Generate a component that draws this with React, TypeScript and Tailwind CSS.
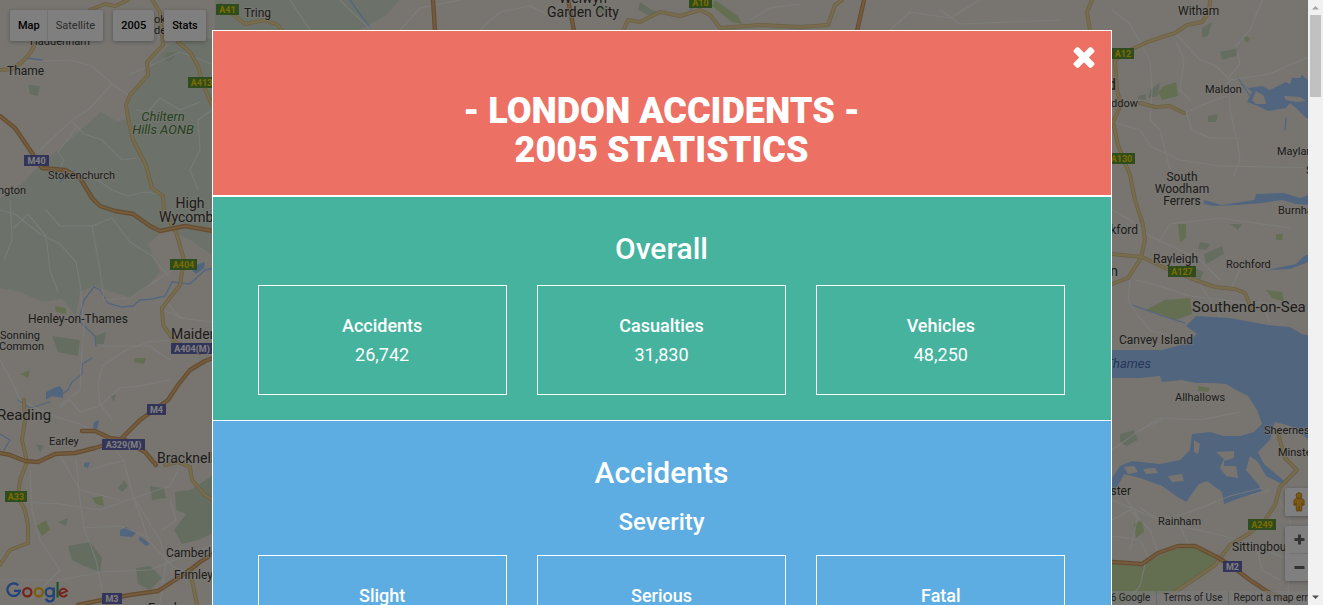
import React from "react";

type Point = [x: number, y: number];
type Anchor = "start" | "middle" | "end";

interface PlaceLabel {
  text: string;
  at: Point;
  size?: number;
  anchor?: Anchor;
}

interface RoadShield {
  text: string;
  at: Point;
  width: number;
  kind: "primary" | "motorway";
}

interface Stat {
  title: string;
  value?: string;
}

const places: PlaceLabel[] = [
  { text: "Haddenham", at: [30, 45], size: 11 },
  { text: "Thame", at: [7, 75] },
  { text: "ok", at: [154, 23], size: 11 },
  { text: "de", at: [154, 34], size: 11 },
  { text: "Tring", at: [244, 17] },
  { text: "Welwyn", at: [583, 3], size: 14, anchor: "middle" },
  { text: "Garden City", at: [583, 17], size: 14, anchor: "middle" },
  { text: "Stokenchurch", at: [48, 179], size: 11 },
  { text: "Watlington", at: [26, 194], size: 11, anchor: "end" },
  { text: "High", at: [190, 208], size: 14, anchor: "middle" },
  { text: "Wycombe", at: [159, 222], size: 14 },
  { text: "Henley-on-Thames", at: [28, 323] },
  { text: "Sonning", at: [0, 339], size: 11 },
  { text: "Common", at: [-1, 350], size: 11 },
  { text: "Maidenhead", at: [171, 339], size: 14 },
  { text: "Reading", at: [-3, 420], size: 15 },
  { text: "Earley", at: [49, 445], size: 11 },
  { text: "Bracknell", at: [157, 463], size: 14 },
  { text: "Camberley", at: [166, 557] },
  { text: "Frimley", at: [174, 579] },
  { text: "Farnborough", at: [148, 612], size: 13 },
  { text: "Witham", at: [1178, 15] },
  { text: "Maldon", at: [1205, 93], size: 11 },
  { text: "Chelmsford", at: [1116, 90], size: 16, anchor: "end" },
  { text: "Great Baddow", at: [1138, 107], size: 11, anchor: "end" },
  { text: "South", at: [1182, 181], anchor: "middle" },
  { text: "Woodham", at: [1182, 193], anchor: "middle" },
  { text: "Ferrers", at: [1182, 205], anchor: "middle" },
  { text: "Mayland", at: [1277, 155], size: 11 },
  { text: "Southminster", at: [1306, 174], size: 11 },
  { text: "Burnham", at: [1278, 214], size: 11 },
  { text: "Wickford", at: [1138, 234], anchor: "end" },
  { text: "Basildon", at: [1118, 276], size: 14, anchor: "end" },
  { text: "Rayleigh", at: [1153, 263] },
  { text: "Rochford", at: [1226, 268], size: 11 },
  { text: "Southend-on-Sea", at: [1192, 312], size: 15 },
  { text: "Canvey Island", at: [1119, 344], size: 12 },
  { text: "Allhallows", at: [1175, 401], size: 11 },
  { text: "Sheerness", at: [1264, 434], size: 11 },
  { text: "Minster", at: [1278, 456], size: 11 },
  { text: "Rochester", at: [1131, 495], anchor: "end" },
  { text: "Rainham", at: [1158, 525], size: 11 },
  { text: "Sittingbourne", at: [1232, 551], size: 12 },
];

const shields: RoadShield[] = [
  { text: "A41", at: [216, 4], width: 23, kind: "primary" },
  { text: "A10", at: [689, -3], width: 23, kind: "primary" },
  { text: "A413", at: [188, 77], width: 27, kind: "primary" },
  { text: "M40", at: [24, 155], width: 25, kind: "motorway" },
  { text: "A404", at: [170, 259], width: 27, kind: "primary" },
  { text: "A404(M)", at: [171, 343], width: 42, kind: "motorway" },
  { text: "M4", at: [147, 404], width: 19, kind: "motorway" },
  { text: "A329(M)", at: [102, 439], width: 43, kind: "motorway" },
  { text: "A33", at: [5, 491], width: 22, kind: "primary" },
  { text: "M3", at: [102, 593], width: 20, kind: "motorway" },
  { text: "A12", at: [1112, 48], width: 22, kind: "primary" },
  { text: "A130", at: [1108, 153], width: 27, kind: "primary" },
  { text: "A127", at: [1168, 266], width: 28, kind: "primary" },
  { text: "A249", at: [1248, 519], width: 28, kind: "primary" },
  { text: "M2", at: [1223, 561], width: 19, kind: "motorway" },
];

const woods = [
  "M220 40L190 36 168 46 152 62 147 80 130 96 128 118 118 122 101 112 72 138 40 165 22 184 0 198V288L20 292 42 302 62 299 76 316 80 292 94 286 130 298 142 292 160 272 148 244 166 228 190 240 220 260Z",
  "M215 0H400L385 16 360 30H215Z",
];

const denseWoods = [
  "M215 474L190 490 175 492 176 510 186 514 174 530 182 544 198 540 215 532Z",
  "M68 546L90 542 102 558 100 572 84 566 72 560Z",
  "M136 568L150 566 162 578 150 590 138 584Z",
  "M52 336L80 340 78 356 58 352Z",
  "M150 486L164 488 166 498 152 500Z",
];

const parks = [
  "M1146 310L1165 300 1190 298 1192 314 1176 320 1160 314Z",
  "M1112 564L1142 566 1160 555 1180 548 1196 548 1216 558 1218 564 1200 578 1174 591 1112 605Z",
  "M1158 92L1164 86 1176 82 1178 96 1162 100Z",
  "M1276 234L1283 234 1282 240 1276 240Z",
  "M1178 224L1186 224 1186 238 1180 242Z",
  "M1266 290L1282 292 1284 302 1272 298Z",
  "M1134 524L1142 520 1144 532 1136 538Z",
  "M1198 386L1210 388 1208 392 1198 391Z",
  "M1244 36L1250 38 1248 42 1245 41Z",
  "M36 526L46 520 50 530 42 536Z",
  "M92 498L102 496 104 506 96 504Z",
  "M135 358L146 358 144 364 134 362Z",
  "M55 306L66 308 66 314 56 312Z",
  "M20 374L30 370 28 378Z",
  "M715 0L738 16 742 24 732 22 712 6Z",
];

const groves = [
  "M1138 96L1146 94 1146 100 1138 99ZM1150 90L1160 82 1158 96 1148 98ZM1204 254L1222 246 1224 254 1206 264Z",
  "M1200 242L1210 244 1206 250 1198 249ZM1202 28L1212 22 1208 36 1202 38ZM1220 52L1238 48 1236 56 1222 60Z",
  "M1208 116L1218 114 1216 122 1208 122ZM1120 434L1134 430 1138 440 1126 446 1120 442ZM28 85L40 86 38 96 30 94Z",
  "M96 336L106 332 104 344 96 344ZM166 52L178 52 170 62 164 60ZM640 2L652 10 660 12 650 16 638 10Z",
  "M600 4L612 10 606 16 596 10ZM1194 268L1204 272 1200 280 1186 276ZM1230 224L1242 224 1238 230Z",
  "M118 488L124 480 128 486 122 492ZM58 522L68 518 66 526ZM110 396L116 394 114 402ZM36 444L44 446 40 452Z",
];

const waters = [
  "M1236 78L1248 88 1262 86 1270 90 1286 82 1290 84 1292 78 1300 78 1302 75 1308 80H1323V118H1306L1296 108 1290 103 1286 108 1268 111 1258 106 1247 102 1252 92Z",
  "M1204 200L1222 205 1254 200 1256 194 1284 193 1300 198 1323 190V206L1296 204 1282 200 1262 203 1238 205 1214 206 1204 204Z",
  "M1260 272L1276 268 1296 264 1304 256 1323 250V256L1306 263 1290 269 1270 270Z",
  "M1196 316L1230 318 1268 325 1290 327 1302 334 1323 338V452L1304 436 1290 426 1275 422 1270 440 1258 452 1264 464 1276 474 1288 484 1282 484 1266 476 1258 462 1250 456 1246 470 1258 484 1262 491 1240 498 1224 504 1222 492 1207 481 1199 484 1186 502 1176 496 1162 486 1140 478 1124 474 1118 486 1112 490V478L1120 466 1132 461 1160 464 1180 460 1190 450 1192 434 1210 432 1224 436 1240 436 1254 432 1262 424 1257 410 1248 396 1236 390 1226 384 1212 383 1196 383 1182 380 1162 382 1160 376 1140 378H1112V350L1134 350 1162 350 1184 344 1197 334 1186 326Z",
  "M192 270L198 264 205 262 204 268 196 274Z",
  "M46 392L54 388 60 386 63 390 63 398 52 396 46 400Z",
  "M94 422L99 420 97 430 93 428Z",
  "M84 463L90 462 88 468 84 467Z",
  "M120 530L126 527 136 533 132 537 120 536ZM140 536L150 544 146 546 139 540Z",
];

const mudflats = [
  "M1252 100L1256 91 1264 96 1266 104 1256 104Z",
  "M1284 96L1300 97 1306 101 1296 102 1286 100Z",
  "M1216 452L1234 451 1234 458 1224 461 1224 466 1236 466 1238 478 1226 476 1220 468 1224 459Z",
  "M1143 469L1155 468 1158 473 1146 474Z",
  "M1194 440L1200 444 1198 454 1194 452Z",
  "M1168 476L1182 474 1184 481 1172 482Z",
  "M1124 467L1134 466 1138 472 1128 474Z",
];

const streams = [
  "M80 315L84 300 94 287 100 290 108 303 122 307 133 306 140 300 152 299 165 296 172 282 190 284 205 270 215 268",
  "M80 322L95 336 96 346M92 358L82 364 82 374 72 382 68 390 62 394",
  "M0 434L10 440 4 450M18 400L30 408 50 402",
  "M26 58L42 60M60 182L75 170",
  "M1238 78L1250 96M1286 118L1285 130M1132 305L1160 315 1185 323",
  "M350 0L360 14 370 28M690 10L705 0",
];

const lanes = [
  "M0 210L15 214 40 234 60 244 76 262 80 284 84 330 82 350 80 390 60 405",
  "M10 200L12 240 4 260M14 228L28 214 46 236 50 270 58 292",
  "M46 210L60 226 92 226 100 270 104 300 130 298 160 278 172 270",
  "M92 226L112 218 130 242 152 256 168 276",
  "M26 62L70 60 92 66 112 84 130 96",
  "M112 84L90 108 70 122 40 150",
  "M130 74L150 66 180 52 212 64",
  "M72 122L84 134 102 140 122 160 136 158",
  "M60 168L64 160 58 152 76 128",
  "M92 176L112 190 128 196 144 192 160 194",
  "M200 102L180 110 160 98 148 112 136 110",
  "M212 110L198 120 200 150 190 170 198 190",
  "M0 360L12 382 20 400 40 410 60 418 80 424 108 438 124 462 134 500 142 520 148 540 172 566 186 572",
  "M102 366L126 350 148 342 170 340M102 366L98 386 100 404 112 420",
  "M60 408L70 400 80 412 100 406 120 388 140 386 170 380",
  "M76 460L80 500 84 528 96 560 102 590M84 528L120 526 150 538",
  "M30 470L32 510 40 540 60 570 30 600M0 580L60 580 102 572 150 570 212 545",
  "M20 502L60 504 100 510 134 498 170 486 178 470",
  "M134 498L160 540 166 560 160 605M170 500L176 520 162 530",
  "M90 470L110 464 126 460M60 456L80 490 120 500",
  "M165 300L180 318 212 322M162 310L190 320M100 346L150 346 170 360",
  "M290 0L310 30M340 0L352 12 370 28M400 30L420 8 460 0M480 30L500 12 530 6 560 20",
  "M890 30L910 12 950 18 980 0M940 10L960 24 1060 20M750 20L770 8 800 4",
  "M1112 10L1130 24 1150 60 1152 90 1150 120 1160 130 1170 170",
  "M1176 42L1184 60 1180 90 1190 100M1176 34L1200 60 1216 66 1228 78 1230 110 1238 145 1240 160 1234 176",
  "M1228 78L1240 64 1236 46 1250 30 1262 0M1230 80L1270 74 1323 50",
  "M1184 113L1200 106 1226 96M1186 112L1192 130 1210 138 1240 138",
  "M1112 122L1140 130 1150 146 1180 160 1220 166 1323 168",
  "M1112 210L1130 220 1150 236 1180 250 1200 260 1220 280",
  "M1130 280L1128 300 1138 316 1150 330 1170 336M1136 280L1160 286 1190 296 1240 302 1300 304",
  "M1196 278L1210 300 1220 316M1240 270L1232 286M1260 300L1270 322M1160 240L1170 224 1220 218 1290 228",
  "M1140 430L1160 418 1200 420 1240 412M1112 450L1140 430 1162 420",
  "M1112 500L1150 516 1180 526 1215 534 1240 540 1290 560",
  "M1112 520L1130 510 1150 530 1158 552M1120 490L1138 516 1130 550M1112 536L1140 540 1150 560",
  "M1140 508L1160 520 1190 512 1230 496 1262 488M1250 496L1270 490M1280 500L1290 520 1288 600",
  "M1128 600L1140 586 1146 560M1256 545L1262 570 1280 580M1180 526L1190 548",
];

const primaryRoads = [
  "M0 70L12 69 22 62 31 52 35 44M90 10L105 4 115 6 128 0",
  "M152 0L160 12 163 45 147 62 148 75 130 95 126 105 128 118 133 140 146 165 152 188 163 196 164 212 176 232 184 260 180 285 162 308 163 325 175 342 200 353",
  "M178 42L190 52 198 66 203 84 212 105",
  "M24 400L25 420 22 440 27 462 20 480 18 497 25 510 28 525 28 543 10 550 0 565",
  "M165 465L178 462 190 467 192 480 205 495 213 500",
  "M188 570L192 580 197 605",
  "M220 5L230 12 245 24 265 20 278 25 282 31",
  "M623 31L628 20 640 22 660 12 680 16 700 10 710 15 720 28 760 25 800 27 828 25 835 5 842 0",
  "M1092 0L1087 12 1090 31",
  "M1210 0L1209 12 1202 22 1187 25 1175 33 1150 41 1130 50 1115 60 1117 90 1121 105 1113 122 1118 145 1130 175 1135 200 1143 225 1145 240 1141 258 1128 278 1112 284",
  "M1140 103L1155 107 1170 106 1184 113",
  "M1112 254L1142 257 1165 268 1195 280 1215 287 1235 289 1245 293 1251 308",
  "M1278 433L1285 458 1297 470 1280 487 1275 505 1265 520 1250 533 1230 545 1215 565 1190 582 1172 594",
];

const motorways = [
  "M0 116L15 128 30 150 42 168 65 170 80 178 92 198 100 206 115 211 133 214 150 226 160 231 185 226 213 231",
  "M213 358L205 361 190 370 178 385 168 400 140 420 120 440 95 448 75 453 55 454 38 462 25 461 10 455 0 453",
  "M82 431L95 431 110 438 125 440 145 452 156 465",
  "M78 605L102 600 130 595 158 591 175 580 190 570 200 562 213 554",
  "M433 0L435 31M568 0L572 20 574 31M864 0L857 31",
  "M1112 562L1142 564 1158 553 1178 546 1195 546 1215 556 1230 565 1250 580 1268 592 1290 600",
];

function Paths({ list }: { list: string[] }) {
  return (
    <>
      {list.map((d) => (
        <path key={d} d={d} />
      ))}
    </>
  );
}

function MapCanvas() {
  return (
    <svg
      className="absolute inset-0 size-full font-[Roboto,sans-serif]"
      viewBox="0 0 1323 605"
      preserveAspectRatio="xMidYMid slice"
      role="img"
      aria-label="Map of London and surroundings"
    >
      <rect width="1323" height="605" fill="#f0ebe3" />
      <g fill="#d8e4d2">
        <Paths list={woods} />
      </g>
      <g fill="#cadbc2">
        <Paths list={denseWoods} />
        <Paths list={groves} />
      </g>
      <g fill="#c8dca2">
        <Paths list={parks} />
      </g>
      <g fill="#a3cbfd">
        <Paths list={waters} />
      </g>
      <g fill="#f0ebe3">
        <Paths list={mudflats} />
      </g>
      <g fill="none" strokeLinejoin="round" strokeLinecap="round">
        <g stroke="#a3cbfd" strokeWidth="1.3">
          <Paths list={streams} />
        </g>
        <g stroke="#ffffff" strokeWidth="1.2" opacity={0.65}>
          <Paths list={lanes} />
        </g>
        <g stroke="#d9c088" strokeWidth="4">
          <Paths list={primaryRoads} />
        </g>
        <g stroke="#f0d99c" strokeWidth="2.4">
          <Paths list={primaryRoads} />
        </g>
        <g stroke="#cc9a60" strokeWidth="4.4">
          <Paths list={motorways} />
        </g>
        <g stroke="#e8b87c" strokeWidth="2">
          <Paths list={motorways} />
        </g>
      </g>
      <g
        fill="#3c3833"
        stroke="#f4f1ea"
        strokeOpacity={0.6}
        strokeWidth="2"
        strokeLinejoin="round"
        paintOrder="stroke"
      >
        {places.map(({ text, at: [x, y], size = 12, anchor = "start" }) => (
          <text key={text} x={x} y={y} fontSize={size} textAnchor={anchor}>
            {text}
          </text>
        ))}
        <g fill="#48823a" fontSize="13" fontStyle="italic" textAnchor="middle">
          <text x="163" y="121">
            Chiltern
          </text>
          <text x="163" y="134">
            Hills AONB
          </text>
        </g>
      </g>
      <text
        x="1151"
        y="368"
        fontSize="13"
        fontStyle="italic"
        textAnchor="end"
        fill="#4a6fb0"
      >
        Thames
      </text>
      <g fontSize="9" fontWeight="700" textAnchor="middle">
        {shields.map(({ text, at: [x, y], width, kind }) => (
          <g key={text}>
            <rect
              x={x}
              y={y}
              width={width}
              height="11"
              fill={kind === "primary" ? "#5f9a38" : "#6768b4"}
            />
            <text
              x={x + width / 2}
              y={y + 9}
              fill={kind === "primary" ? "#f5d800" : "#ffffff"}
            >
              {text}
            </text>
          </g>
        ))}
      </g>
    </svg>
  );
}

function GoogleLogo() {
  return (
    <a
      href="#google"
      aria-label="Google"
      className="absolute bottom-0 left-[6px] block"
    >
      <svg width="64" height="26" viewBox="0 0 64 26" fill="none">
        <g strokeWidth="2.2">
          <path d="M12.3 6.3A6.3 6.3 0 1 0 13.9 11.8H8" stroke="#4285f4" />
          <circle cx="21.3" cy="13.3" r="4.1" stroke="#ea4335" />
          <circle cx="32.8" cy="13.3" r="4.1" stroke="#fbbc05" />
          <path
            d="M47.8 8.5V18A4 4 0 0 1 40 19.6"
            stroke="#4285f4"
          />
          <circle cx="43.8" cy="13.3" r="4.1" stroke="#4285f4" />
          <path d="M51.6 3V18.4" stroke="#34a853" />
          <path
            d="M54.4 14.9L61 12A3.9 3.9 0 1 0 61 15.4"
            stroke="#ea4335"
            strokeWidth="1.9"
          />
        </g>
      </svg>
    </a>
  );
}

function Pegman() {
  return (
    <svg width="12" height="20" viewBox="0 0 12 20" aria-hidden="true">
      <g fill="#f5b52c" stroke="#b87a14" strokeWidth="0.8">
        <path d="M3.6 6.3H8.4L11 8 11.2 13 9.6 13.4 9 11 8.6 19H6.4L6 14.5 5.6 19H3.4L3 11 2.4 13.4 0.8 13 1 8Z" />
        <circle cx="6" cy="3.6" r="2.9" />
      </g>
    </svg>
  );
}

function MapControls() {
  const panel = "bg-white shadow-[0_1px_4px_rgba(0,0,0,0.3)]";
  return (
    <>
      <div className="absolute left-[10px] top-[10px] flex h-[31px] gap-[10px] text-[11px] font-medium text-black">
        <div className={`flex rounded-xs ${panel}`}>
          <button type="button" className="pl-2 pr-[7px] pt-px">
            Map
          </button>
          <button
            type="button"
            className="border-l border-[#e6e6e6] px-2 pt-px font-normal text-[#565656]"
          >
            Satellite
          </button>
        </div>
        <button type="button" className={`rounded-xs px-2 pt-px ${panel}`}>
          2005
        </button>
        <button type="button" className={`rounded-xs px-2 pt-px ${panel}`}>
          Stats
        </button>
      </div>

      <div className="absolute bottom-6 right-[10px] flex w-7 flex-col gap-[10px]">
        <button
          type="button"
          aria-label="Street View"
          className={`flex h-7 items-center justify-center rounded-xs ${panel}`}
        >
          <Pegman />
        </button>
        <div className={`flex flex-col rounded-xs ${panel}`}>
          <button
            type="button"
            aria-label="Zoom in"
            className="flex h-[27px] items-center justify-center"
          >
            <svg width="11" height="11" viewBox="0 0 11 11" aria-hidden="true">
              <path d="M5.5 0.5V10.5M0.5 5.5H10.5" stroke="#666" strokeWidth="3" />
            </svg>
          </button>
          <span className="mx-1 h-px bg-[#e6e6e6]" />
          <button
            type="button"
            aria-label="Zoom out"
            className="flex h-[27px] items-center justify-center"
          >
            <svg width="11" height="11" viewBox="0 0 11 11" aria-hidden="true">
              <path d="M0.5 5.5H10.5" stroke="#666" strokeWidth="3" />
            </svg>
          </button>
        </div>
      </div>

      <GoogleLogo />

      <div className="absolute bottom-0 right-0 flex h-[14px] items-center divide-x divide-[#d0d0d0] bg-[#f5f5f5]/70 text-[10px] leading-[14px] text-[#444]">
        <span className="px-[6px]">Map data ©2016 Google</span>
        <a href="#terms" className="pl-[6px] pr-[5px]">
          Terms of Use
        </a>
        <a href="#report" className="pl-[5px] pr-[6px]">
          Report a map error
        </a>
      </div>
    </>
  );
}

function StatCard({ title, value }: Stat) {
  return (
    <div className="min-h-[110px] border border-white py-[25px] text-center text-lg/[29px]">
      <h4 className="font-medium">{title}</h4>
      {value && <p>{value}</p>}
    </div>
  );
}

function StatGrid({ stats }: { stats: Stat[] }) {
  return (
    <div className="mt-5 grid grid-cols-3 gap-[30px]">
      {stats.map((stat) => (
        <StatCard key={stat.title} {...stat} />
      ))}
    </div>
  );
}

const overall: Stat[] = [
  { title: "Accidents", value: "26,742" },
  { title: "Casualties", value: "31,830" },
  { title: "Vehicles", value: "48,250" },
];

const severity: Stat[] = [
  { title: "Slight" },
  { title: "Serious" },
  { title: "Fatal" },
];

function StatsDialog() {
  return (
    <div
      role="dialog"
      aria-modal="true"
      aria-labelledby="stats-title"
      className="mx-auto w-full max-w-[900px] border border-white text-center text-white"
    >
      <header className="relative border-b-2 border-white bg-[#ec7063] pb-[25px] pt-[61px]">
        <button
          type="button"
          aria-label="Close"
          className="absolute right-4 top-4"
        >
          <svg
            width="22"
            height="21"
            viewBox="110 366 1188 1188"
            fill="currentColor"
            aria-hidden="true"
          >
            <path d="M1298 1322q0 40-28 68l-136 136q-28 28-68 28t-68-28l-294-294-294 294q-28 28-68 28t-68-28l-136-136q-28-28-28-68t28-68l294-294-294-294q-28-28-28-68t28-68l136-136q28-28 68-28t68 28l294 294 294-294q28-28 68-28t68 28l136 136q28 28 28 68t-28 68l-294 294 294 294q28 28 28 68z" />
          </svg>
        </button>
        <h1 id="stats-title" className="text-4xl/[39px] font-black uppercase">
          - London Accidents -
          <br />
          2005 Statistics
        </h1>
      </header>
      <section className="border-b border-white bg-[#45b39d] px-[45px] pb-[25px] pt-[35px]">
        <h2 className="text-3xl/[33px] font-medium">Overall</h2>
        <StatGrid stats={overall} />
      </section>
      <section className="bg-[#5dade2] px-[45px] pb-[25px] pt-[35px]">
        <h2 className="text-3xl/[33px] font-medium">Accidents</h2>
        <h3 className="mt-5 text-2xl/[26px] font-medium">Severity</h3>
        <StatGrid stats={severity} />
      </section>
    </div>
  );
}

function ScrollTrack() {
  return (
    <div
      aria-hidden="true"
      className="absolute inset-y-0 right-0 flex w-[15px] flex-col items-center gap-1 bg-[#f1f1f1] py-1"
    >
      <svg width="7" height="7" viewBox="0 0 7 7">
        <path d="M0 5.5L3.5 2 7 5.5Z" fill="#a3a3a3" />
      </svg>
      <div className="h-[82px] w-[11px] bg-[#c1c1c1]" />
      <svg className="mt-auto" width="7" height="7" viewBox="0 0 7 7">
        <path d="M0 1.5L3.5 5 7 1.5Z" fill="#505050" />
      </svg>
    </div>
  );
}

export default function App() {
  return (
    <main className="relative h-screen overflow-hidden font-[Roboto,sans-serif]">
      <MapCanvas />
      <MapControls />
      <div className="absolute inset-0 overflow-y-auto bg-black/50 py-[30px] [scrollbar-width:none]">
        <StatsDialog />
      </div>
      <ScrollTrack />
    </main>
  );
}
